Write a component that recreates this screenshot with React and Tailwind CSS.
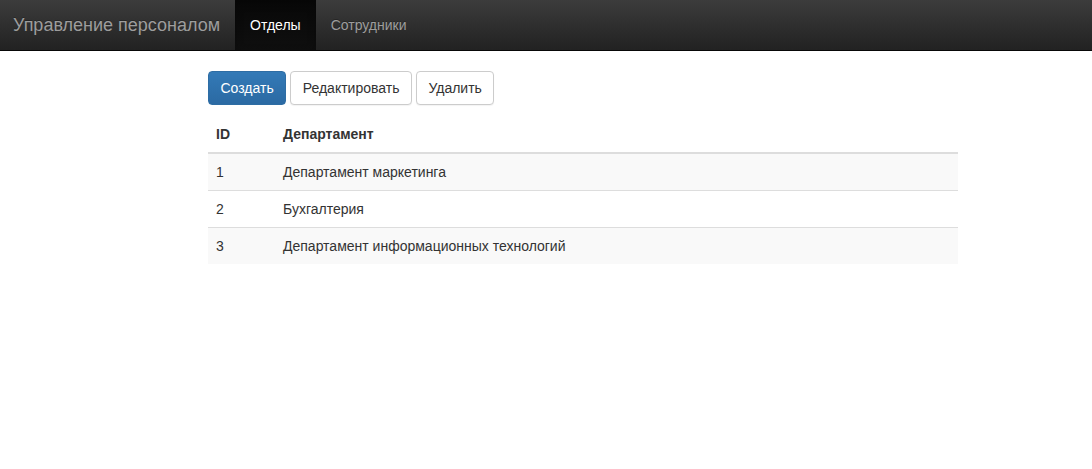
import React from "react";

const departments = [
  { id: 1, name: "Департамент маркетинга" },
  { id: 2, name: "Бухгалтерия" },
  { id: 3, name: "Департамент информационных технологий" },
];

const App = () => {
  return (
    <div className="min-h-[469px] bg-white font-['Liberation_Sans',Arial,sans-serif] text-[14px] leading-[20px] text-[#333]">
      <nav className="flex h-[51px] border-b border-[#080808] bg-gradient-to-b from-[#3c3c3c] to-[#222]">
        <a className="block h-[50px] py-[15px] pl-[13px] pr-[15px] text-[18px] leading-[20px] text-[#9d9d9d] [text-shadow:0_-1px_0_rgba(0,0,0,0.25)]">
          Управление персоналом
        </a>
        <ul className="flex">
          <li>
            <a className="block h-[50px] bg-gradient-to-b from-[#080808] to-[#0f0f0f] px-[15px] py-[15px] text-white shadow-[inset_0_3px_9px_rgba(0,0,0,0.25)]">
              Отделы
            </a>
          </li>
          <li>
            <a className="block h-[50px] px-[15px] py-[15px] text-[#9d9d9d] [text-shadow:0_-1px_0_rgba(0,0,0,0.25)]">
              Сотрудники
            </a>
          </li>
        </ul>
      </nav>

      <div className="ml-[208px] mt-[20px] w-[750px]">
        <div className="flex gap-[4px]">
          <button className="h-[34px] rounded-[4px] border border-[#2e6da4] bg-gradient-to-b from-[#337ab7] to-[#2b6aa3] px-[11.5px] text-white">
            Создать
          </button>
          <button className="h-[34px] rounded-[4px] border border-[#ccc] bg-white px-[11.5px] text-[#333] shadow-[0_1px_1px_rgba(0,0,0,0.05)]">
            Редактировать
          </button>
          <button className="h-[34px] rounded-[4px] border border-[#ccc] bg-white px-[11.5px] text-[#333] shadow-[0_1px_1px_rgba(0,0,0,0.05)]">
            Удалить
          </button>
        </div>

        <table className="mt-[11px] w-full border-collapse text-left">
          <thead>
            <tr className="border-b-2 border-[#ddd]">
              <th className="w-[67px] p-[8px] font-bold">ID</th>
              <th className="p-[8px] font-bold">Департамент</th>
            </tr>
          </thead>
          <tbody>
            {departments.map((d, i) => (
              <tr
                key={d.id}
                className={`border-t border-[#ddd] first:border-t-0 ${
                  i % 2 === 0 ? "bg-[#f9f9f9]" : "bg-white"
                }`}
              >
                <td className="p-[8px]">{d.id}</td>
                <td className="p-[8px]">{d.name}</td>
              </tr>
            ))}
          </tbody>
        </table>
      </div>
    </div>
  );
};

export default App;
